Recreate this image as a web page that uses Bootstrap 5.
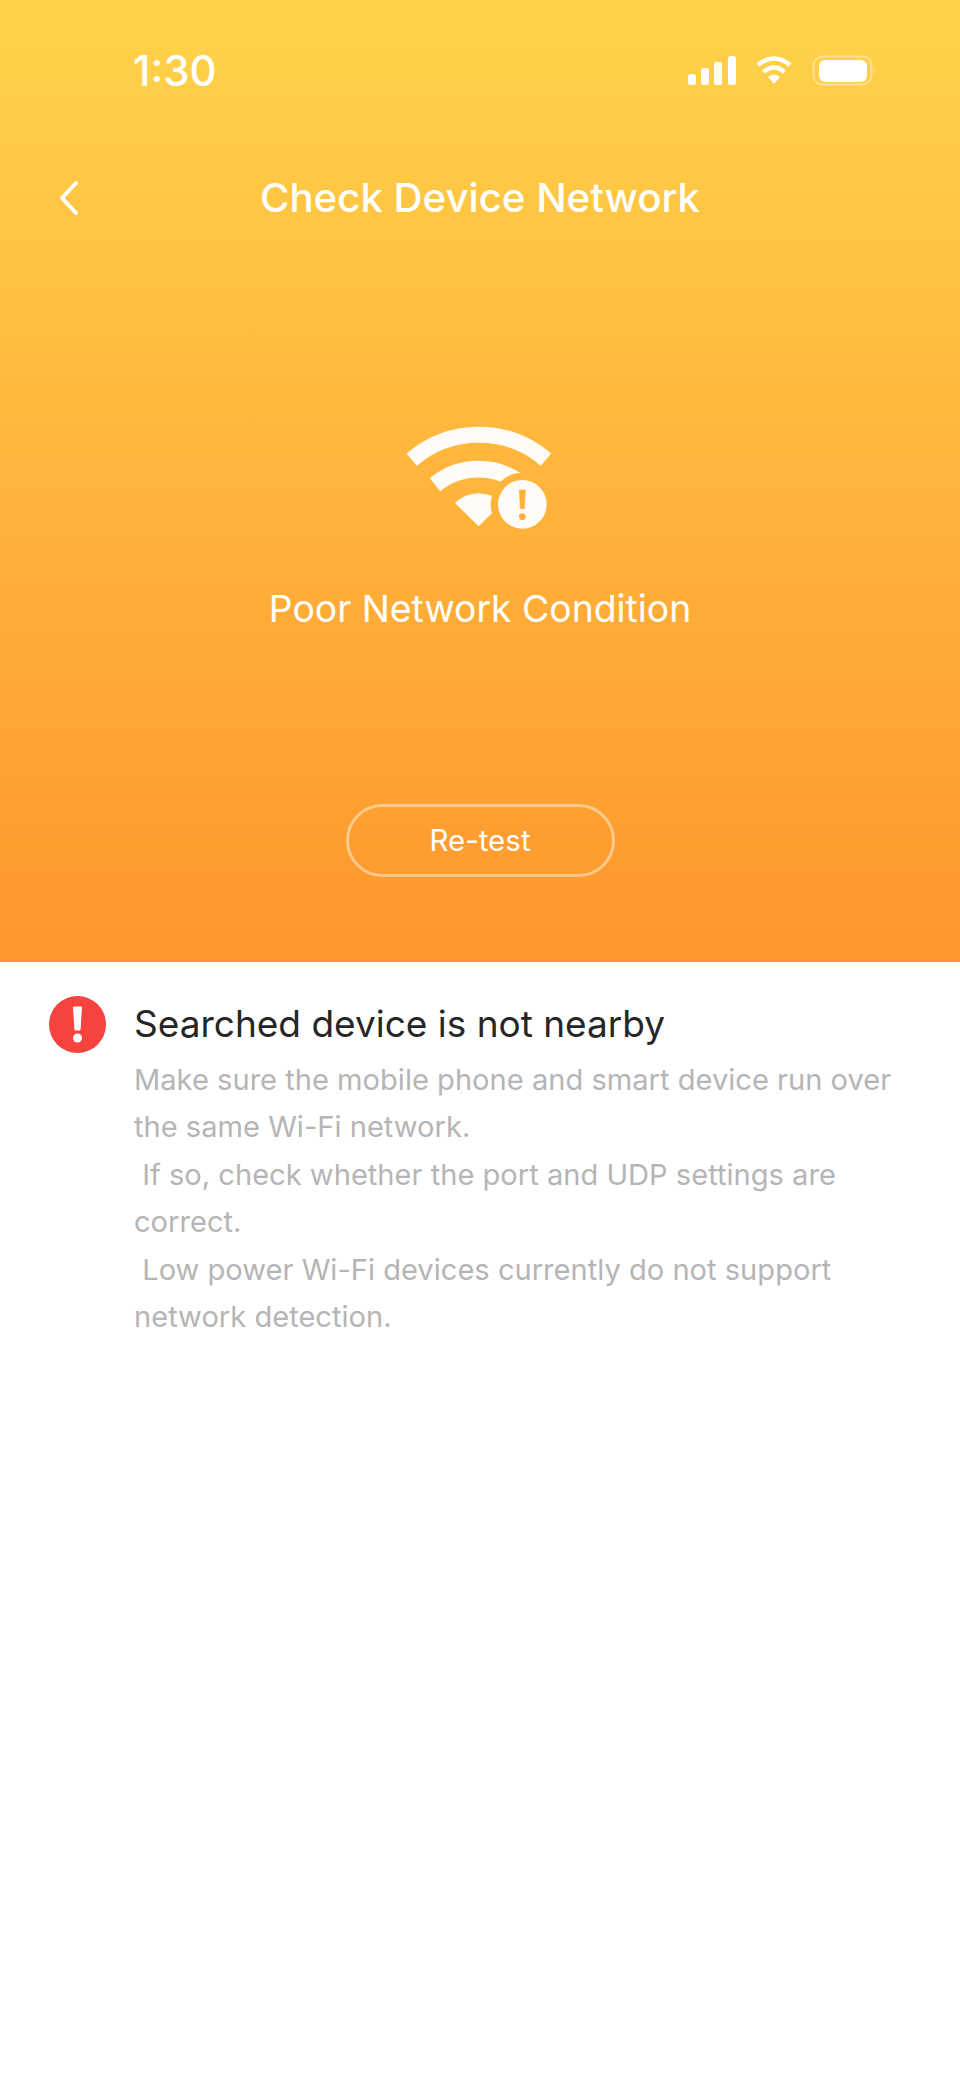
<!DOCTYPE html>
<html lang="en">
  <head>
    <meta charset="UTF-8" />
    <meta name="viewport" content="width=device-width, initial-scale=1.0" />
    <title>Check Device Network</title>
    <link href="https://cdn.jsdelivr.net/npm/bootstrap@5.3.0/dist/css/bootstrap.min.css" rel="stylesheet" />
    <style>
      body {
        font-family: Inter, "Liberation Sans", sans-serif;
        background: #fff;
      }
      .net-head {
        height: 962px;
        padding-top: 43px;
        background: linear-gradient(180deg, #ffd34a 0%, #ff962c 100%);
        color: #fff;
      }
      .status-row {
        height: 56px;
        padding: 0 84px 0 133px;
      }
      .status-time {
        font-size: 42px;
        font-weight: 500;
        line-height: 56px;
      }
      .nav-row {
        height: 50px;
        margin-top: 74px;
        padding: 0 58px;
      }
      .nav-title {
        font-size: 40.2px;
        font-weight: 500;
        line-height: 50px;
      }
      .net-icon {
        margin-top: 201px;
      }
      .net-state {
        font-size: 37.3px;
        line-height: 50px;
        margin-top: 55px;
      }
      .retest-btn {
        width: 269px;
        height: 73px;
        margin-top: 170px;
        border: 3px solid rgba(255, 255, 255, 0.45);
        border-radius: 37px;
        color: #fff;
        font-size: 29.5px;
        line-height: 1;
      }
      .issue-row {
        padding: 34px 60px 0 49px;
      }
      .issue-mark {
        width: 57px;
        height: 57px;
        margin-right: 28px;
      }
      .issue-title {
        font-size: 37px;
        line-height: 50px;
        color: #262626;
        margin: 3px 0 7px;
      }
      .issue-text {
        font-size: 29.1px;
        line-height: 47.4px;
        color: #b5b5b5;
        white-space: pre-wrap;
        margin: 0;
      }
    </style>
  </head>

  <body>
    <div class="net-head">
      <!-- Status bar -->
      <div class="status-row d-flex justify-content-between align-items-center">
        <span class="status-time">1:30</span>
        <svg width="189" height="32" viewBox="0 0 189 32" fill="#fff">
          <rect x="1" y="19" width="8" height="11" rx="2.5" />
          <rect x="14" y="13" width="8" height="17" rx="2.5" />
          <rect x="27" y="7" width="8" height="23" rx="2.5" />
          <rect x="41" y="1" width="8" height="29" rx="2.5" />
          <path d="M87 29l-6-7q6-5 12 0z" />
          <path d="M76.5 17q10.500-9 21 0M71 10q16-13 32 0" fill="none" stroke="#fff" stroke-width="4.5" />
          <rect x="126.5" y="1.5" width="58" height="28" rx="9" fill="none" stroke="#fff" stroke-opacity="0.4" stroke-width="2" />
          <rect x="132" y="5" width="48" height="22" rx="6" />
          <path d="M186.5 11.500q2.500 4 0 8z" fill-opacity="0.4" />
        </svg>
      </div>

      <!-- Title bar -->
      <div class="nav-row d-flex align-items-center position-relative">
        <svg class="position-absolute" width="22" height="36" viewBox="0 0 22 36" fill="none" stroke="#fff" stroke-width="4" stroke-linecap="round" stroke-linejoin="round">
          <path d="M18 3L4 18l14 15" />
        </svg>
        <div class="nav-title flex-grow-1 text-center">Check Device Network</div>
      </div>

      <!-- Result -->
      <div class="d-flex flex-column align-items-center">
        <svg class="net-icon" width="150" height="105" viewBox="0 0 450 315">
          <defs>
            <mask id="badge-cut">
              <rect width="450" height="315" fill="#fff" />
              <circle cx="352" cy="241" r="95" fill="#000" />
            </mask>
          </defs>
          <g mask="url(#badge-cut)" fill="#fff" fill-opacity="0.96">
            <path d="M20 107A308 308 0 0 1 423 107" fill="none" stroke="#fff" stroke-opacity="0.96" stroke-width="48" />
            <path d="M90 182A208 208 0 0 1 352 182" fill="none" stroke="#fff" stroke-opacity="0.96" stroke-width="50" />
            <path d="M221 307L150 237A100 100 0 0 1 292 237Z" />
          </g>
          <circle cx="352" cy="241" r="73" fill="#fff" fill-opacity="0.96" />
          <path d="M343 198h18l-3 56h-12z" fill="#ffb03a" stroke="#ffb03a" stroke-width="2" stroke-linejoin="round" />
          <circle cx="352" cy="278" r="10" fill="#ffb03a" />
        </svg>
        <div class="net-state">Poor Network Condition</div>
        <button type="button" class="btn retest-btn d-flex align-items-center justify-content-center p-0">Re-test</button>
      </div>
    </div>

    <!-- Issue -->
    <div class="issue-row d-flex align-items-start">
      <svg class="issue-mark flex-shrink-0" viewBox="0 0 57 57">
        <circle cx="28.5" cy="28.5" r="28.5" fill="#f64340" />
        <path d="M24.5 11h8l-1.500 23h-5z" fill="#fff" stroke="#fff" stroke-width="1" stroke-linejoin="round" />
        <circle cx="28.5" cy="42" r="4.5" fill="#fff" />
      </svg>
      <div>
        <h1 class="issue-title fw-normal">Searched device is not nearby</h1>
        <p class="issue-text">Make sure the mobile phone and smart device run over the same Wi-Fi network.
 If so, check whether the port and UDP settings are correct.
 Low power Wi-Fi devices currently do not support network detection.</p>
      </div>
    </div>

    <script src="https://cdn.jsdelivr.net/npm/bootstrap@5.3.0/dist/js/bootstrap.bundle.min.js"></script>
  </body>
</html>
